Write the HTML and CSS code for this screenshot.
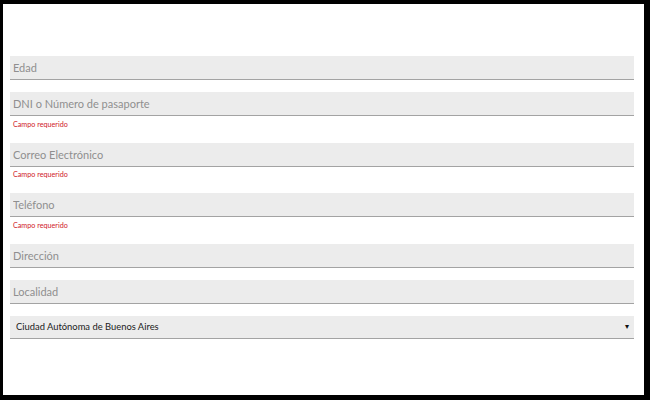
FILE: index.html
```html
<!DOCTYPE html>
<html lang="es">
<head>
    <meta charset="UTF-8">
    <meta name="viewport" content="width=device-width, initial-scale=1.0">
    <title>Datos personales</title>
    <link rel="stylesheet" href="styles.css">
</head>
<body>

    <div class="pantalla">
        <form class="formulario">
            <div class="campo">
                <input type="text" class="entrada" placeholder="Edad">
            </div>

            <div class="campo">
                <input type="text" class="entrada" placeholder="DNI o Número de pasaporte">
                <div class="error">Campo requerido</div>
            </div>

            <div class="campo">
                <input type="text" class="entrada" placeholder="Correo Electrónico">
                <div class="error">Campo requerido</div>
            </div>

            <div class="campo">
                <input type="text" class="entrada" placeholder="Teléfono">
                <div class="error">Campo requerido</div>
            </div>

            <div class="campo">
                <input type="text" class="entrada" placeholder="Dirección">
            </div>

            <div class="campo">
                <input type="text" class="entrada" placeholder="Localidad">
            </div>

            <div class="campo selector">
                <select class="entrada desplegable">
                    <option>Ciudad Autónoma de Buenos Aires</option>
                    <option>Buenos Aires</option>
                    <option>Córdoba</option>
                    <option>Santa Fe</option>
                </select>
            </div>
        </form>
    </div>

</body>
</html>
```

FILE: styles.css
```css
html, body {
    margin: 0;
    padding: 0;
    background-color: #000;
}

body {
    font-family: 'Lato', 'Open Sans', sans-serif;
    height: 400px;
    overflow: hidden;
}

.pantalla {
    background-color: #fff;
    margin: 4px 6px 0 3px;
    height: 391px;
    padding: 52px 10px 0 7px;
    box-sizing: border-box;
}

.formulario {
    display: flex;
    flex-direction: column;
    gap: 12px;
}

.campo {
    display: flex;
    flex-direction: column;
}

.entrada {
    display: block;
    width: 100%;
    height: 24px;
    box-sizing: border-box;
    margin: 0;
    padding: 0 3px;
    border: none;
    border-bottom: 1px solid #a3a3a3;
    border-radius: 0;
    background-color: #ececec;
    font-family: inherit;
    font-size: 11px;
    color: #333;
    outline: none;
}

.entrada::placeholder {
    color: #8f8f8f;
}

.error {
    height: 14.6px;
    box-sizing: border-box;
    padding: 3.5px 0 0 3px;
    line-height: 10px;
    font-size: 7.2px;
    color: #d0202a;
}

.selector {
    position: relative;
}

.desplegable {
    -webkit-appearance: none;
    appearance: none;
    height: 23px;
    padding-left: 6px;
    font-size: 9.4px;
    color: #222;
}

.selector::after {
    content: "▾";
    position: absolute;
    right: 5px;
    top: 5px;
    font-size: 8px;
    color: #111;
    pointer-events: none;
}
```
